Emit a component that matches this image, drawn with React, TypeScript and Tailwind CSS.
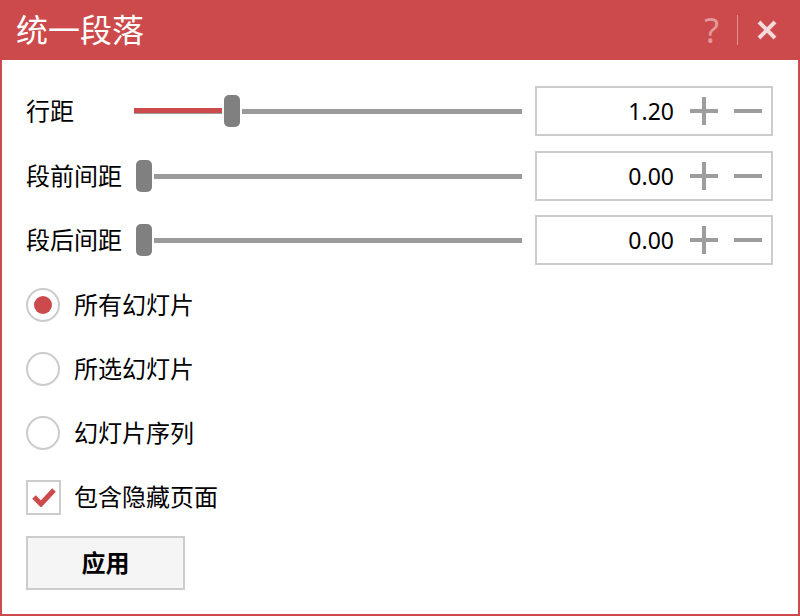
import React from 'react';

const RED = 'bg-[#cc4a4b]';

const Slider = ({ offset, fill }: { offset: number; fill?: boolean }) => (
  <div className="relative w-[388px] h-[50px] flex items-center">
    <div className="w-full h-[5px] bg-[#9b9b9b]" />
    {fill && <div className="absolute left-0 top-[22px] h-[5px] bg-[#cc4a4b]" style={{ width: offset - 2 }} />}
    <div
      className="absolute top-[9px] w-[16px] h-[32px] rounded-[5px] bg-[#808080] shadow-[0_0_0_2px_white]"
      style={{ left: offset }}
    />
  </div>
);

const SpinBox = ({ value }: { value: string }) => (
  <div className="w-[238px] h-[50px] border-2 border-[#cccccc] flex items-center justify-end pr-[9px]">
    <span className="text-[23px] text-black mr-[16px]">{value}</span>
    <svg width="28" height="28" viewBox="0 0 28 28" className="mr-[16px]">
      <rect x="0" y="12" width="28" height="4" fill="#9d9d9d" />
      <rect x="12" y="0" width="4" height="28" fill="#9d9d9d" />
    </svg>
    <svg width="28" height="28" viewBox="0 0 28 28">
      <rect x="0" y="12" width="28" height="4" fill="#9d9d9d" />
    </svg>
  </div>
);

const Row = ({ label, value, offset, fill, className }: { label: string; value: string; offset: number; fill?: boolean; className?: string }) => (
  <div className={`flex items-center ${className ?? ''}`}>
    <span className="w-[108px] text-[24px] text-black">{label}</span>
    <Slider offset={offset} fill={fill} />
    <div className="ml-[13px]">
      <SpinBox value={value} />
    </div>
  </div>
);

const Radio = ({ label, checked }: { label: string; checked?: boolean }) => (
  <div className="flex items-center gap-[14px]">
    <div className="w-[34px] h-[34px] rounded-full border-2 border-[#cccccc] flex items-center justify-center">
      {checked && <div className="w-[18px] h-[18px] rounded-full bg-[#cc4a4b]" />}
    </div>
    <span className="text-[24px] leading-[34px] text-black">{label}</span>
  </div>
);

export default function App() {
  return (
    <div
      className={`w-[800px] h-[616px] ${RED} flex flex-col`}
      style={{ fontFamily: '"Noto Sans", "Noto Sans CJK SC", sans-serif' }}
    >
      {/* Title bar */}
      <div className="h-[60px] flex items-center pl-[16px] pr-[22px] shrink-0">
        <span className="text-[32px] text-white leading-none">统一段落</span>
        <span className="ml-auto text-[34px] text-white/45 leading-none">?</span>
        <div className="w-px h-[30px] bg-white/40 mx-[18px]" />
        <svg width="22" height="22" viewBox="0 0 22 22">
          <path d="M3 3 L19 19 M19 3 L3 19" stroke="#f6dada" strokeWidth="4" />
        </svg>
      </div>

      {/* Body */}
      <div className="flex-1 mx-[2px] mb-[2px] bg-white px-6 pt-[26px] flex flex-col">
        <Row label="行距" value="1.20" offset={90} fill />
        <Row label="段前间距" value="0.00" offset={2} className="mt-[15px]" />
        <Row label="段后间距" value="0.00" offset={2} className="mt-[14px]" />

        <div className="mt-[23px] flex flex-col gap-[30px]">
          <Radio label="所有幻灯片" checked />
          <Radio label="所选幻灯片" />
          <Radio label="幻灯片序列" />
        </div>

        <div className="mt-[29px] flex items-center gap-[13px]">
          <div className="w-[35px] h-[35px] border-2 border-[#cccccc] flex items-center justify-center">
            <svg width="24" height="20" viewBox="0 0 24 20">
              <path d="M2 10 L9 17 L22 3" stroke="#cc4a4b" strokeWidth="5" fill="none" />
            </svg>
          </div>
          <span className="text-[24px] text-black">包含隐藏页面</span>
        </div>

        <button className="mt-[21px] w-[159px] h-[54px] bg-[#f5f5f5] border-2 border-[#cccccc] text-[24px] font-bold text-black">
          应用
        </button>
      </div>
    </div>
  );
}
